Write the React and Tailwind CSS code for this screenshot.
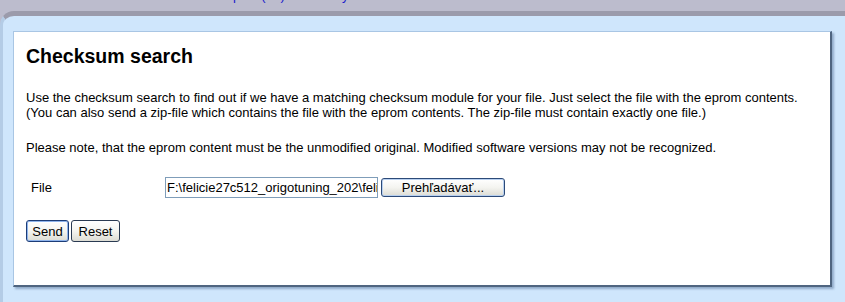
import React from "react";

export default function App() {
  const font = { fontFamily: '"Liberation Sans", Arial, sans-serif' };
  return (
    <div className="w-[845px] h-[302px] overflow-hidden bg-[#bcbccd] flex flex-col" style={font}>
      {/* top band with clipped link text */}
      <div className="h-[11px] shrink-0 overflow-hidden relative">
        <div className="flex items-start text-[13px] leading-[15px] text-[#1a1acc] -mt-[12px]">
          <span className="ml-[233px]">p</span>
          <span className="ml-[21px]">(</span>
          <span className="ml-[15px]">)</span>
          <span className="ml-[57px]">y</span>
        </div>
      </div>
      <div className="flex-1 rounded-tl-[14px] border-t-[5px] border-l-[3px] border-t-[#9b9bab] border-l-[#b4cce6] bg-[#cfe6fc] pt-[15px] pl-[10px] pr-[13px]">
        <div className="h-[256px] bg-white border-t border-l border-t-[#a9c6e4] border-l-[#a9c6e4] border-r-2 border-b-2 border-r-[#4f6580] border-b-[#4f6580] shadow-[2px_2px_2px_rgba(70,100,140,0.45)] pt-[12px] pl-[12px] text-black">
          <h1 className="text-[19.5px] leading-[24px] font-bold">Checksum search</h1>
          <p className="mt-[22px] text-[13px] leading-[15px]">
            Use the checksum search to find out if we have a matching checksum module for your file. Just select the file with the eprom contents.
            <br />
            (You can also send a zip-file which contains the file with the eprom contents. The zip-file must contain exactly one file.)
          </p>
          <p className="mt-[20px] text-[13px] leading-[15px]">
            Please note, that the eprom content must be the unmodified original. Modified software versions may not be recognized.
          </p>
          <div className="mt-[22px] flex items-center text-[13px]">
            <span className="w-[139px] pl-[5px]">File</span>
            <div className="w-[213px] h-[21px] border border-[#7f9db9] bg-white overflow-hidden whitespace-nowrap px-[1px] leading-[19px] text-[13px]">
              F:\felicie27c512_origotuning_202\feli
            </div>
            <button className="ml-[3px] w-[124px] h-[19px] rounded-[3px] border border-[#2c4a78] bg-gradient-to-b from-white via-[#f4f4f0] to-[#dcdcd4] shadow-[inset_0_0_0_1px_#b8d0f0] text-[13px] leading-[15px] text-black">
              Prehľadávať...
            </button>
          </div>
          <div className="mt-[22px] flex gap-[2px] text-[13px]">
            <button className="w-[43px] h-[22px] rounded-[3px] border border-[#1c3d78] bg-gradient-to-b from-white via-[#f4f4f0] to-[#dcdcd4] shadow-[inset_0_0_0_1px_#8fb4ec] text-[13px] leading-[15px]">
              Send
            </button>
            <button className="w-[49px] h-[22px] rounded-[3px] border border-[#2a3a52] bg-gradient-to-b from-white via-[#f4f4f0] to-[#dcdcd4] text-[13px] leading-[15px]">
              Reset
            </button>
          </div>
        </div>
      </div>
    </div>
  );
}
